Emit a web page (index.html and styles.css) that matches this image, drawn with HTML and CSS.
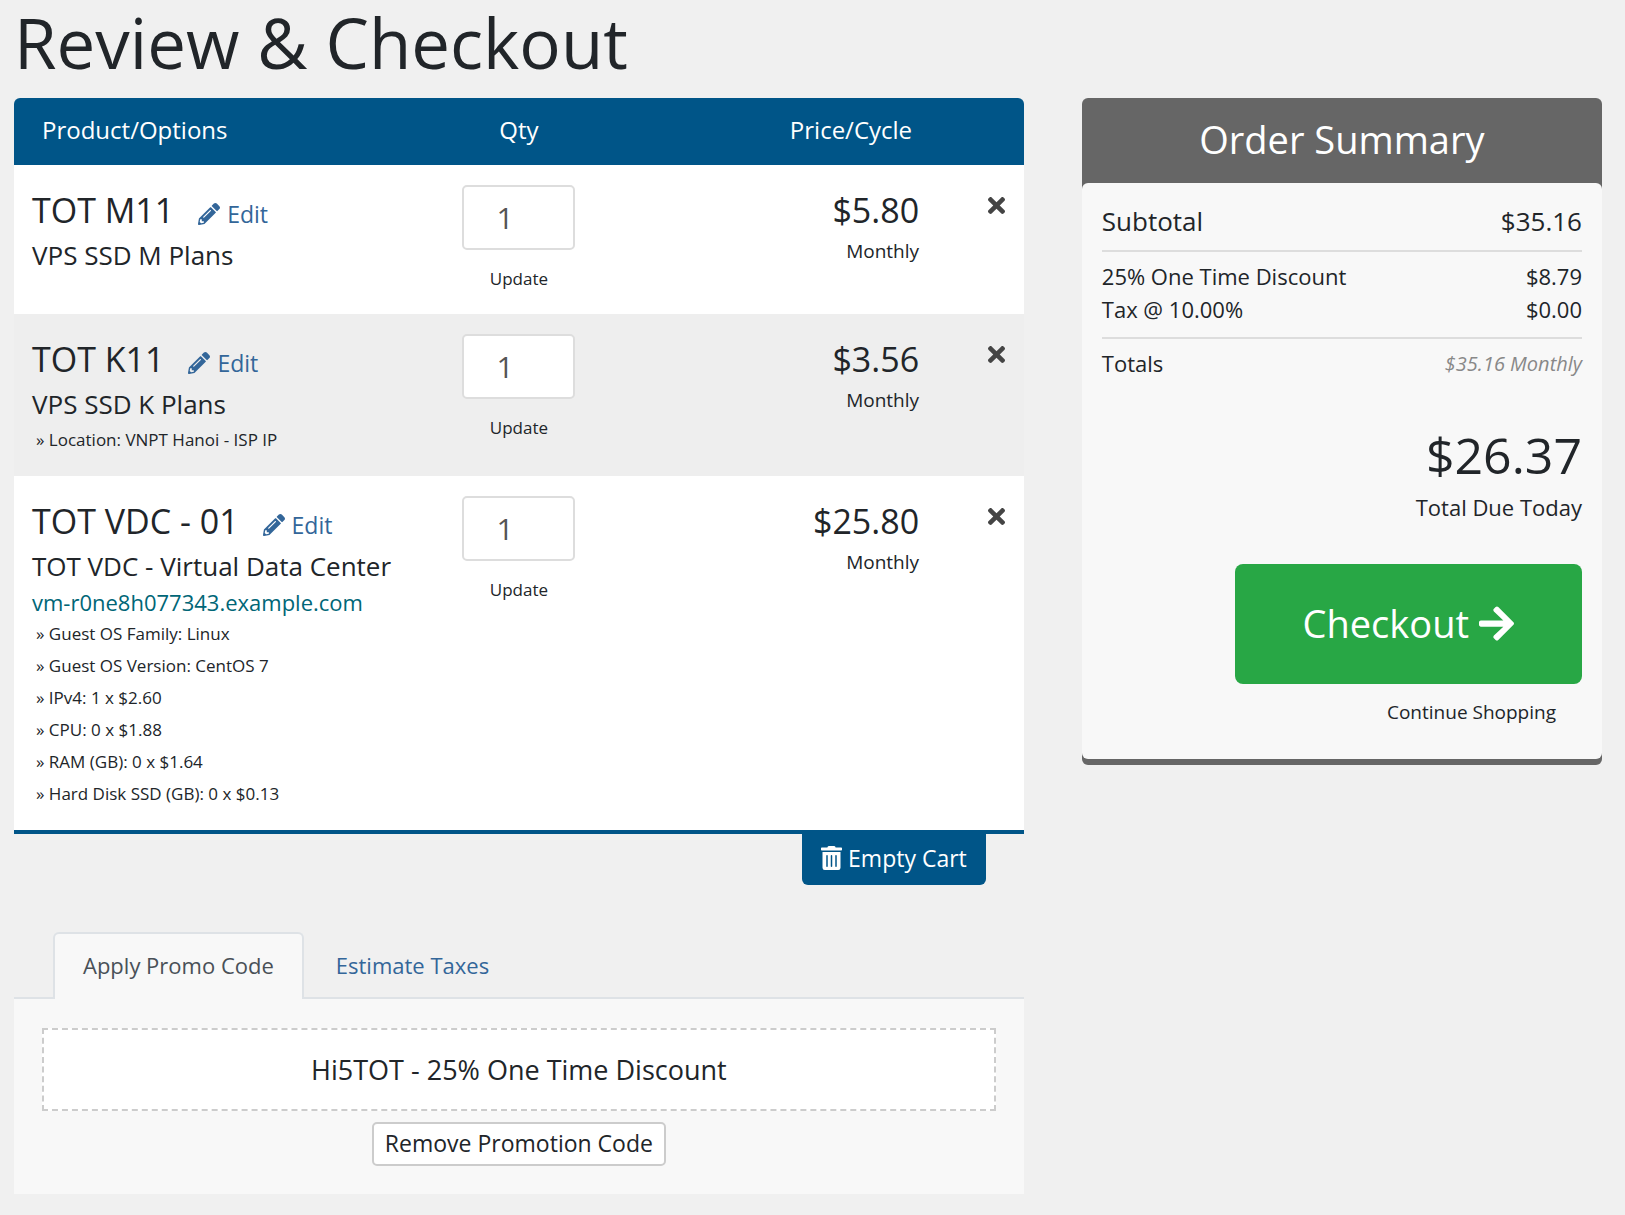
FILE: index.html
```html
<!DOCTYPE html>
<html lang="en">
<head>
    <meta charset="UTF-8">
    <meta name="viewport" content="width=device-width, initial-scale=1.0">
    <title>Review &amp; Checkout</title>
    <link rel="stylesheet" href="styles.css">
</head>
<body>
    <svg class="sprite" aria-hidden="true">
        <symbol id="icon-pencil" viewBox="0 0 512 512">
            <path d="M497.9 142.1l-46.1 46.1c-4.7 4.7-12.3 4.7-17 0l-111-111c-4.7-4.7-4.7-12.3 0-17l46.1-46.1c18.7-18.7 49.1-18.7 67.9 0l60.1 60.1c18.8 18.7 18.8 49.1 0 67.9zM284.2 99.8L21.6 362.4.4 483.9c-2.9 16.4 11.4 30.6 27.8 27.8l121.5-21.3 262.6-262.6c4.7-4.7 4.7-12.3 0-17l-111-111c-4.8-4.7-12.4-4.7-17.1 0zM124.1 339.9c-5.5-5.5-5.5-14.3 0-19.8l154-154c5.5-5.5 14.3-5.5 19.8 0s5.5 14.3 0 19.8l-154 154c-5.5 5.5-14.3 5.5-19.8 0zM88 424h48v36.3l-64.5 11.3-31.1-31.1L51.7 376H88v48z"/>
        </symbol>
        <symbol id="icon-times" viewBox="0 80 352 352">
            <path d="M242.72 256l100.07-100.07c12.28-12.28 12.28-32.19 0-44.48l-22.24-22.24c-12.28-12.28-32.19-12.28-44.48 0L176 189.28 75.93 89.21c-12.28-12.28-32.19-12.28-44.48 0L9.21 111.45c-12.28 12.28-12.28 32.19 0 44.48L109.28 256 9.21 356.07c-12.28 12.28-12.28 32.19 0 44.48l22.24 22.24c12.28 12.28 32.2 12.28 44.48 0L176 322.72l100.07 100.07c12.28 12.28 32.2 12.28 44.48 0l22.24-22.24c12.28-12.28 12.28-32.19 0-44.48L242.72 256z"/>
        </symbol>
        <symbol id="icon-trash" viewBox="0 0 448 512">
            <path d="M32 464a48 48 0 0 0 48 48h288a48 48 0 0 0 48-48V128H32zm272-256a16 16 0 0 1 32 0v224a16 16 0 0 1-32 0zm-96 0a16 16 0 0 1 32 0v224a16 16 0 0 1-32 0zm-96 0a16 16 0 0 1 32 0v224a16 16 0 0 1-32 0zM432 32H312l-9.4-18.7A24 24 0 0 0 281.1 0H166.8a23.72 23.72 0 0 0-21.4 13.3L136 32H16A16 16 0 0 0 0 48v32a16 16 0 0 0 16 16h416a16 16 0 0 0 16-16V48a16 16 0 0 0-16-16z"/>
        </symbol>
        <symbol id="icon-arrow" viewBox="0 32 448 448">
            <path d="M190.5 66.9l22.2-22.2c9.4-9.4 24.6-9.4 33.9 0L441 239c9.4 9.4 9.4 24.6 0 33.9L246.6 467.3c-9.4 9.4-24.6 9.4-33.9 0l-22.2-22.2c-9.5-9.5-9.3-25 .4-34.3L311.4 296H24c-13.3 0-24-10.7-24-24v-32c0-13.3 10.7-24 24-24h287.4L190.9 101.2c-9.8-9.3-10-24.8-.4-34.3z"/>
        </symbol>
    </svg>

    <h1>Review &amp; Checkout</h1>

    <div class="layout">
        <main>
            <table class="cart">
                <thead>
                    <tr>
                        <th class="col-product">Product/Options</th>
                        <th class="col-qty">Qty</th>
                        <th class="col-price">Price/Cycle</th>
                        <th class="col-remove"></th>
                    </tr>
                </thead>
                <tbody>
                    <tr>
                        <td class="col-product">
                            <div class="item-title">TOT M11 <a href="#" class="edit"><svg class="icon-edit"><use href="#icon-pencil"/></svg>Edit</a></div>
                            <div class="item-group">VPS SSD M Plans</div>
                        </td>
                        <td class="col-qty">
                            <input type="text" class="qty" value="1" aria-label="Quantity of TOT M11">
                            <button type="button" class="update">Update</button>
                        </td>
                        <td class="col-price">
                            <div class="price">$5.80</div>
                            <div class="cycle">Monthly</div>
                        </td>
                        <td class="col-remove">
                            <button type="button" class="remove" aria-label="Remove TOT M11"><svg><use href="#icon-times"/></svg></button>
                        </td>
                    </tr>
                    <tr>
                        <td class="col-product">
                            <div class="item-title">TOT K11 <a href="#" class="edit"><svg class="icon-edit"><use href="#icon-pencil"/></svg>Edit</a></div>
                            <div class="item-group">VPS SSD K Plans</div>
                            <ul class="options">
                                <li>» Location: VNPT Hanoi - ISP IP</li>
                            </ul>
                        </td>
                        <td class="col-qty">
                            <input type="text" class="qty" value="1" aria-label="Quantity of TOT K11">
                            <button type="button" class="update">Update</button>
                        </td>
                        <td class="col-price">
                            <div class="price">$3.56</div>
                            <div class="cycle">Monthly</div>
                        </td>
                        <td class="col-remove">
                            <button type="button" class="remove" aria-label="Remove TOT K11"><svg><use href="#icon-times"/></svg></button>
                        </td>
                    </tr>
                    <tr>
                        <td class="col-product">
                            <div class="item-title">TOT VDC - 01 <a href="#" class="edit"><svg class="icon-edit"><use href="#icon-pencil"/></svg>Edit</a></div>
                            <div class="item-group">TOT VDC - Virtual Data Center</div>
                            <div class="item-domain">vm-r0ne8h077343.example.com</div>
                            <ul class="options">
                                <li>» Guest OS Family: Linux</li>
                                <li>» Guest OS Version: CentOS 7</li>
                                <li>» IPv4: 1 x $2.60</li>
                                <li>» CPU: 0 x $1.88</li>
                                <li>» RAM (GB): 0 x $1.64</li>
                                <li>» Hard Disk SSD (GB): 0 x $0.13</li>
                            </ul>
                        </td>
                        <td class="col-qty">
                            <input type="text" class="qty" value="1" aria-label="Quantity of TOT VDC - 01">
                            <button type="button" class="update">Update</button>
                        </td>
                        <td class="col-price">
                            <div class="price">$25.80</div>
                            <div class="cycle">Monthly</div>
                        </td>
                        <td class="col-remove">
                            <button type="button" class="remove" aria-label="Remove TOT VDC - 01"><svg><use href="#icon-times"/></svg></button>
                        </td>
                    </tr>
                </tbody>
            </table>
            <div class="empty-cart">
                <button type="button"><svg><use href="#icon-trash"/></svg>Empty Cart</button>
            </div>

            <nav class="tabs">
                <a href="#promo" class="active">Apply Promo Code</a>
                <a href="#taxes">Estimate Taxes</a>
            </nav>
            <section class="tab-panel" id="promo">
                <div class="promo-code">Hi5TOT - 25% One Time Discount</div>
                <button type="button" class="remove-promo">Remove Promotion Code</button>
            </section>
        </main>

        <aside class="summary">
            <h2>Order Summary</h2>
            <div class="summary-body">
                <div class="line subtotal"><span>Subtotal</span><span>$35.16</span></div>
                <div class="taxes">
                    <div class="line"><span>25% One Time Discount</span><span>$8.79</span></div>
                    <div class="line"><span>Tax @ 10.00%</span><span>$0.00</span></div>
                </div>
                <div class="line"><span>Totals</span><em>$35.16 Monthly</em></div>
                <div class="total">$26.37</div>
                <div class="total-label">Total Due Today</div>
                <button type="button" class="checkout">Checkout<svg><use href="#icon-arrow"/></svg></button>
                <a href="#" class="continue">Continue Shopping</a>
            </div>
        </aside>
    </div>
</body>
</html>
```
FILE: styles.css
```css
* {
    box-sizing: border-box;
}
body {
    margin: 0;
    padding: 0 23px 22px 14px;
    font-family: "Open Sans", sans-serif;
    font-size: 22px;
    line-height: 33px;
    color: #212529;
    background-color: #f0f0f0;
}
a {
    color: #336699;
    text-decoration: none;
}
button, input {
    font-family: inherit;
    color: inherit;
}
button {
    cursor: pointer;
}
svg {
    fill: currentColor;
}
.sprite {
    display: none;
}
h1 {
    margin: 0 0 14px;
    font-size: 69px;
    line-height: 84px;
    font-weight: 400;
}
.layout {
    display: grid;
    grid-template-columns: 66fr 34fr;
    gap: 58px;
    align-items: start;
}

/* Cart table */
.cart {
    width: 100%;
    table-layout: fixed;
    border-collapse: separate;
    border-spacing: 0;
    border-bottom: 4px solid #005588;
}
.cart th {
    padding: 15px 0 18px;
    font-size: 24px;
    line-height: 34px;
    font-weight: 400;
    color: #fff;
    background-color: #005588;
}
.cart th:first-child {
    border-top-left-radius: 6px;
}
.cart th:last-child {
    border-top-right-radius: 6px;
}
.cart td {
    padding: 20px 0;
    vertical-align: top;
    background-color: #fff;
}
.cart tr:nth-child(even) td {
    background-color: #eee;
}
.cart .col-product {
    width: 40%;
    padding-left: 18px;
    text-align: left;
    white-space: nowrap;
}
.cart th.col-product {
    padding-left: 28px;
}
.cart .col-qty {
    width: 20%;
    text-align: center;
}
.cart .col-price {
    width: 33%;
    padding-right: 34px;
    text-align: right;
}
.cart th.col-price {
    padding-right: 41px;
}
.cart .col-remove {
    width: 7%;
    padding-right: 19px;
    text-align: right;
}
.item-title {
    display: flex;
    align-items: baseline;
    font-size: 34px;
    line-height: 50px;
}
.edit {
    margin-left: 24px;
    font-size: 23px;
    line-height: 32px;
}
.icon-edit {
    width: 22px;
    height: 22px;
    margin-right: 7px;
    vertical-align: -2px;
}
.item-group {
    font-size: 26px;
    line-height: 40px;
}
.item-domain {
    font-size: 22px;
    line-height: 32px;
    color: #006677;
}
.options {
    margin: 0;
    padding: 0 0 0 4px;
    list-style: none;
    font-size: 17px;
    line-height: 32px;
}
.qty {
    display: block;
    width: 113px;
    height: 65px;
    margin: 0 auto 13px;
    padding: 0 24px 0 32px;
    font-size: 30px;
    color: #555;
    background-color: #fff;
    border: 2px solid #ddd;
    border-radius: 5px;
}
.update {
    display: block;
    margin: 0 auto;
    padding: 0;
    font-size: 17px;
    line-height: 31px;
    background: none;
    border: 0;
}
.price {
    font-size: 34px;
    line-height: 50px;
}
.cycle {
    font-size: 19px;
    line-height: 32px;
}
.remove {
    padding: 12px 0;
    line-height: 0;
    color: #444;
    background: none;
    border: 0;
}
.remove svg {
    width: 17px;
    height: 17px;
    stroke: currentColor;
    stroke-width: 1px;
}
.empty-cart {
    padding-right: 38px;
    text-align: right;
}
.empty-cart button {
    display: inline-flex;
    align-items: center;
    gap: 6px;
    padding: 8px 19px 11px;
    font-size: 23px;
    line-height: 32px;
    color: #fff;
    background-color: #005588;
    border: 0;
    border-radius: 0 0 6px 6px;
    vertical-align: top;
}
.empty-cart svg {
    width: 21px;
    height: 24px;
}

/* Promo code tabs */
.tabs {
    display: flex;
    gap: 2px;
    margin-top: 47px;
    padding-left: 39px;
    border-bottom: 2px solid #dee2e6;
}
.tabs a {
    margin-bottom: -2px;
    padding: 16px 28px 19px;
    line-height: 30px;
    border: 2px solid transparent;
    border-bottom: 0;
    border-radius: 6px 6px 0 0;
}
.tabs .active {
    color: #495057;
    background-color: #f8f8f8;
    border-color: #dee2e6;
}
.tab-panel {
    padding: 29px 28px 28px;
    text-align: center;
    background-color: #f8f8f8;
}
.promo-code {
    margin-bottom: 11px;
    padding: 21px;
    font-size: 27px;
    line-height: 37px;
    background-color: #fff;
    border: 2px dashed #ccc;
}
.remove-promo {
    padding: 3px 11px 5px;
    font-size: 23px;
    line-height: 32px;
    vertical-align: top;
    background-color: #fff;
    border: 2px solid #ccc;
    border-radius: 5px;
}

/* Order summary */
.summary {
    padding-bottom: 6px;
    background-color: #666;
    border-radius: 6px;
}
.summary h2 {
    margin: 0;
    padding: 16px 20px 19px;
    font-size: 38px;
    line-height: 50px;
    font-weight: 400;
    text-align: center;
    color: #fff;
}
.summary-body {
    padding: 18px 20px 32px;
    text-align: right;
    background-color: #f8f8f8;
    border-radius: 6px;
}
.line {
    display: flex;
    justify-content: space-between;
}
.line em {
    font-size: 20px;
    color: #888;
}
.subtotal {
    padding-bottom: 9px;
    font-size: 26px;
    line-height: 40px;
}
.taxes {
    margin-bottom: 8px;
    padding: 8px 0 11px;
    border-top: 2px solid #ddd;
    border-bottom: 2px solid #ddd;
}
.total {
    margin-top: 40px;
    font-size: 50px;
    line-height: 71px;
}
.checkout {
    display: block;
    margin: 40px 0 13px auto;
    padding: 34px 68px 36px;
    font-size: 38px;
    line-height: 50px;
    color: #fff;
    background-color: #28a745;
    border: 0;
    border-radius: 8px;
}
.checkout svg {
    width: 35px;
    height: 35px;
    margin-left: 10px;
    vertical-align: -3px;
}
.continue {
    display: block;
    padding-right: 26px;
    font-size: 19px;
    line-height: 30px;
    color: #212529;
}
```
